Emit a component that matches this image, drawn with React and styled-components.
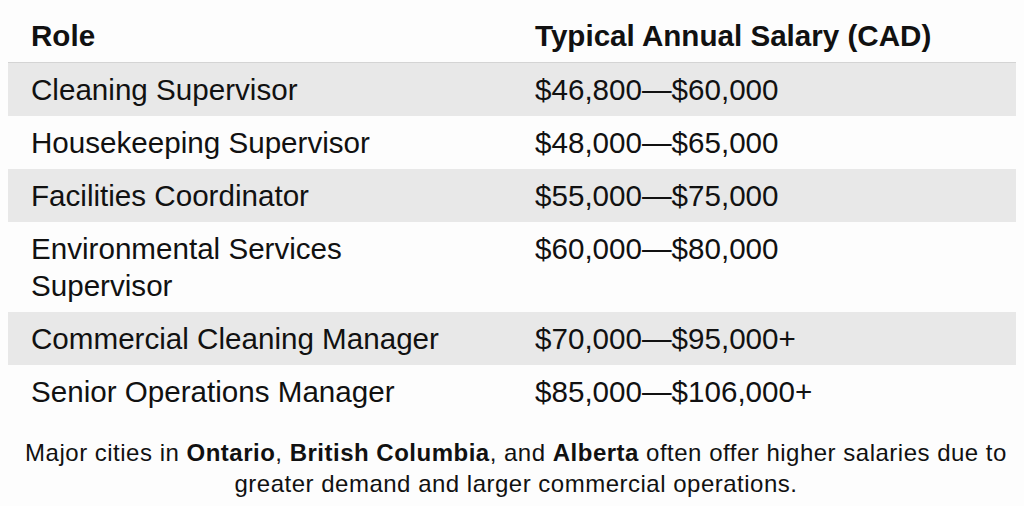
import React from 'react';
import styled, { createGlobalStyle } from 'styled-components';

const GlobalStyle = createGlobalStyle`
  html, body {
    margin: 0;
    padding: 0;
    background: #fdfdfd;
  }
  body {
    font-family: "Liberation Sans", Arial, sans-serif;
    color: #111;
  }
`;

const Page = styled.div`
  width: 1024px;
  height: 506px;
  padding: 0 8px;
  box-sizing: border-box;
  overflow: hidden;
`;

const Table = styled.div`
  display: grid;
  grid-template-columns: 504px 504px;
`;

const HeadCell = styled.div`
  padding: 17px 23px 8px;
  font-size: 29.6px;
  line-height: 37px;
  font-weight: 700;
  border-bottom: 1px solid #d4d4d4;
`;

const Cell = styled.div`
  padding: 8px 23px;
  font-size: 29.6px;
  line-height: 37px;
  background: ${props => (props.$shaded ? '#e8e8e8' : 'transparent')};
`;

const Note = styled.p`
  margin: 19px 0 0;
  padding: 0 0 0 8px;
  text-align: center;
  font-size: 24px;
  letter-spacing: 0.5px;
  line-height: 31px;
  color: #111;

  b {
    font-weight: 700;
  }
`;

const rows = [
  ['Cleaning Supervisor', '$46,800—$60,000'],
  ['Housekeeping Supervisor', '$48,000—$65,000'],
  ['Facilities Coordinator', '$55,000—$75,000'],
  ['Environmental Services Supervisor', '$60,000—$80,000'],
  ['Commercial Cleaning Manager', '$70,000—$95,000+'],
  ['Senior Operations Manager', '$85,000—$106,000+'],
];

export default function App() {
  return (
    <Page>
      <GlobalStyle />
      <Table>
        <HeadCell>Role</HeadCell>
        <HeadCell>Typical Annual Salary (CAD)</HeadCell>
        {rows.map(([role, salary], i) => (
          <React.Fragment key={role}>
            <Cell $shaded={i % 2 === 0}>{role}</Cell>
            <Cell $shaded={i % 2 === 0}>{salary}</Cell>
          </React.Fragment>
        ))}
      </Table>
      <Note>
        Major cities in <b>Ontario</b>, <b>British Columbia</b>, and <b>Alberta</b> often offer higher salaries due to
        greater demand and larger commercial operations.
      </Note>
    </Page>
  );
}
